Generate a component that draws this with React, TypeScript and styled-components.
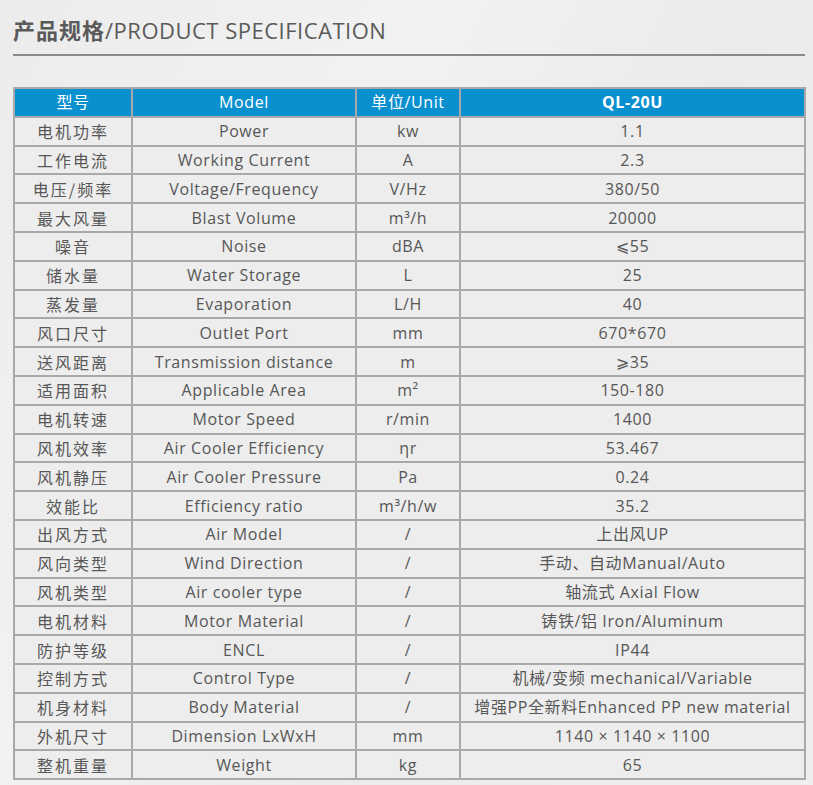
import React from "react";
import styled, { createGlobalStyle } from "styled-components";

const Global = createGlobalStyle`
  html, body { margin: 0; padding: 0; }
  body {
    width: 813px;
    height: 785px;
    overflow: hidden;
    background: linear-gradient(120deg, #ececec 0%, #f2f2f2 35%, #ebebeb 60%, #efefef 100%);
    font-family: "Open Sans", "Noto Sans CJK SC", sans-serif;
  }
`;

const Page = styled.div`
  width: 813px;
  height: 785px;
  box-sizing: border-box;
  padding: 14px 8px 0 13px;
  display: flex;
  flex-direction: column;
`;

const Title = styled.h1`
  margin: 0;
  padding: 0 0 9px 0;
  font-size: 22px;
  line-height: 30px;
  font-weight: 400;
  color: #5a5a5a;
  border-bottom: 2px solid #8a8a8a;
  white-space: nowrap;
  letter-spacing: 0.5px;
`;

const TitleCn = styled.span`
  font-family: "Noto Sans CJK SC", sans-serif;
  font-weight: 700;
  letter-spacing: 1px;
`;

const Table = styled.table`
  margin-top: 31px;
  width: 793px;
  border-collapse: collapse;
  table-layout: fixed;
  border: 2px solid #a9a9a9;
  background: #ededed;
`;

const Row = styled.tr`
  height: 28.8px;
`;

const HeadCell = styled.th<{ $bold?: boolean }>`
  background: #0a8fcf;
  color: #ffffff;
  border: 2px solid #a9a9a9;
  padding: 0;
  font-size: 16px;
  font-weight: ${(p) => (p.$bold ? 700 : 400)};
  text-align: center;
  line-height: 24px;
  font-family: "Open Sans", "Noto Sans CJK SC", sans-serif;
  letter-spacing: 0.6px;
`;

const Cell = styled.td<{ $cn?: boolean }>`
  border: 2px solid #a9a9a9;
  padding: 0;
  color: #575757;
  font-size: 16px;
  text-align: center;
  line-height: 24px;
  white-space: nowrap;
  overflow: hidden;
  font-family: ${(p) =>
    p.$cn ? '"Noto Sans CJK SC", sans-serif' : '"Open Sans", "Noto Sans CJK SC", "DejaVu Sans", sans-serif'};
  letter-spacing: ${(p) => (p.$cn ? "2px" : "0.6px")};
`;

const rows: [string, string, string, string][] = [
  ["电机功率", "Power", "kw", "1.1"],
  ["工作电流", "Working Current", "A", "2.3"],
  ["电压/频率", "Voltage/Frequency", "V/Hz", "380/50"],
  ["最大风量", "Blast Volume", "m³/h", "20000"],
  ["噪音", "Noise", "dBA", "⩽55"],
  ["储水量", "Water Storage", "L", "25"],
  ["蒸发量", "Evaporation", "L/H", "40"],
  ["风口尺寸", "Outlet Port", "mm", "670*670"],
  ["送风距离", "Transmission distance", "m", "⩾35"],
  ["适用面积", "Applicable Area", "m²", "150-180"],
  ["电机转速", "Motor Speed", "r/min", "1400"],
  ["风机效率", "Air Cooler Efficiency", "ηr", "53.467"],
  ["风机静压", "Air Cooler Pressure", "Pa", "0.24"],
  ["效能比", "Efficiency ratio", "m³/h/w", "35.2"],
  ["出风方式", "Air Model", "/", "上出风UP"],
  ["风向类型", "Wind Direction", "/", "手动、自动Manual/Auto"],
  ["风机类型", "Air cooler type", "/", "轴流式 Axial Flow"],
  ["电机材料", "Motor Material", "/", "铸铁/铝 Iron/Aluminum"],
  ["防护等级", "ENCL", "/", "IP44"],
  ["控制方式", "Control Type", "/", "机械/变频 mechanical/Variable"],
  ["机身材料", "Body Material", "/", "增强PP全新料Enhanced PP new material"],
  ["外机尺寸", "Dimension LxWxH", "mm", "1140 × 1140 × 1100"],
  ["整机重量", "Weight", "kg", "65"],
];

export default function App() {
  return (
    <>
      <Global />
      <Page>
        <Title>
          <TitleCn>产品规格</TitleCn>/PRODUCT SPECIFICATION
        </Title>
        <Table>
          <colgroup>
            <col style={{ width: 118 }} />
            <col style={{ width: 224 }} />
            <col style={{ width: 104 }} />
            <col />
          </colgroup>
          <thead>
            <Row>
              <HeadCell>型号</HeadCell>
              <HeadCell>Model</HeadCell>
              <HeadCell>单位/Unit</HeadCell>
              <HeadCell $bold>QL-20U</HeadCell>
            </Row>
          </thead>
          <tbody>
            {rows.map((r) => (
              <Row key={r[0]}>
                <Cell $cn>{r[0]}</Cell>
                <Cell>{r[1]}</Cell>
                <Cell>{r[2]}</Cell>
                <Cell>{r[3]}</Cell>
              </Row>
            ))}
          </tbody>
        </Table>
      </Page>
    </>
  );
}
